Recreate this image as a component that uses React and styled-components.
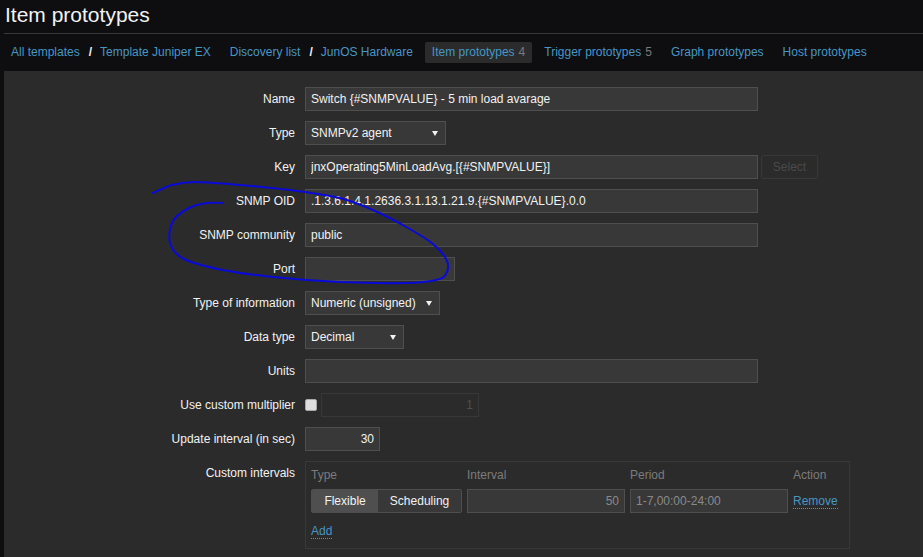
import React from 'react';
import styled, { createGlobalStyle } from 'styled-components';

const GlobalStyle = createGlobalStyle`
  html, body {
    margin: 0;
    background: #0e0e11;
  }
  body {
    font-family: Arial, "Liberation Sans", sans-serif;
    font-size: 12px;
    color: #f2f2f2;
  }
`;

const Page = styled.div`
  position: relative;
  display: flex;
  flex-direction: column;
  min-height: 100vh;
  padding-left: 4px;
  box-sizing: border-box;
  overflow: hidden;
`;

const Header = styled.header`
  height: 33px;
  border-bottom: 1px solid #383838;
`;

const Title = styled.h1`
  margin: 0;
  padding: 3px 0 0 1px;
  font-size: 21px;
  line-height: 24px;
  font-weight: normal;
  color: #f2f2f2;
`;

const Nav = styled.nav`
  display: flex;
  align-items: center;
  gap: 5px;
  padding: 8px 0;
`;

const NavItem = styled.div`
  display: flex;
  align-items: center;
  padding: 0 7px;
  line-height: 21px;
  border-radius: 2px;
  background: ${(p) => (p.$active ? '#2b2b2b' : 'transparent')};
`;

const NavLink = styled.a`
  color: #4796c4;
  text-decoration: none;
`;

const Sep = styled.span`
  margin: 0 8px 0 9px;
  font-weight: bold;
  color: #f2f2f2;
`;

const Count = styled.span`
  margin-left: 4px;
  color: #7a7a7a;
`;

const Panel = styled.main`
  flex: 1;
  background: #2b2b2b;
  padding: 16px 0 20px;
`;

const Form = styled.div`
  display: grid;
  grid-template-columns: 291px 1fr;
  column-gap: 10px;
  row-gap: 10px;
`;

const Label = styled.label`
  text-align: right;
  line-height: 24px;
  white-space: nowrap;
  align-self: start;
`;

const Field = styled.div`
  display: flex;
  align-items: center;
  gap: ${(p) => p.$gap || 0}px;
`;

const Input = styled.input`
  box-sizing: border-box;
  width: ${(p) => p.$w}px;
  height: 24px;
  padding: 0 5px;
  margin: 0;
  background: ${(p) => (p.$disabled ? '#2b2b2b' : '#383838')};
  border: 1px solid ${(p) => (p.$disabled ? '#383838' : '#4f4f4f')};
  color: ${(p) => (p.$disabled ? '#4f4f4f' : p.$muted ? '#8a8a8a' : '#f2f2f2')};
  font-family: Arial, "Liberation Sans", sans-serif;
  font-size: 12px;
  text-align: ${(p) => (p.$right ? 'right' : 'left')};
  outline: none;
`;

const Select = styled.div`
  position: relative;
  box-sizing: border-box;
  width: ${(p) => p.$w}px;
  height: 24px;
  padding: 0 5px;
  line-height: 22px;
  background: #383838;
  border: 1px solid #4f4f4f;
  color: #f2f2f2;
  &::after {
    content: '';
    position: absolute;
    right: 7px;
    top: 9px;
    border-left: 3px solid transparent;
    border-right: 3px solid transparent;
    border-top: 5px solid #f2f2f2;
  }
`;

const GhostButton = styled.button`
  box-sizing: border-box;
  width: 57px;
  height: 24px;
  background: #2b2b2b;
  border: 1px solid #383838;
  border-radius: 2px;
  color: #4a4a4a;
  font-family: Arial, "Liberation Sans", sans-serif;
  font-size: 12px;
  padding: 0;
`;

const Checkbox = styled.span`
  box-sizing: border-box;
  width: 12px;
  height: 12px;
  background: #dedede;
  border: 1px solid #a8a8a8;
  border-radius: 2px;
`;

const IntervalsBox = styled.div`
  box-sizing: border-box;
  width: 545px;
  padding: 5px;
  border: 1px solid #383838;
`;

const IntervalGrid = styled.div`
  display: grid;
  grid-template-columns: 151px 158px 158px auto;
  column-gap: 5px;
  row-gap: 6px;
  align-items: center;
`;

const ColHead = styled.div`
  line-height: 16px;
  color: #7c7c7c;
`;

const RadioGroup = styled.div`
  display: flex;
  box-sizing: border-box;
  height: 24px;
  border: 1px solid #4f4f4f;
  border-radius: 2px;
  overflow: hidden;
`;

const RadioOption = styled.span`
  width: ${(p) => p.$w}px;
  line-height: 22px;
  text-align: center;
  background: ${(p) => (p.$on ? '#4f4f4f' : '#383838')};
  color: #f2f2f2;
`;

const DotLink = styled.a`
  justify-self: start;
  color: #4796c4;
  text-decoration: none;
  line-height: 14px;
  border-bottom: 1px dotted #4796c4;
`;

const AddRow = styled.div`
  grid-column: 1 / -1;
  height: 24px;
  display: flex;
  align-items: center;
`;

const Scribble = styled.svg`
  position: absolute;
  left: 0;
  top: 0;
  pointer-events: none;
`;

// hand-drawn annotation around the SNMP fields
const pts = [
  [153, 193], [172, 185], [195, 182], [240, 185], [290, 190], [340, 198],
  [375, 211], [408, 228], [433, 244], [447, 261], [446, 274], [436, 280],
  [407, 283], [340, 282], [273, 277], [223, 270], [184, 259], [170, 243],
  [173, 221], [189, 208], [207, 203], [223, 203],
];

const smoothPath = (p) => {
  let d = `M${p[0][0]},${p[0][1]}`;
  for (let i = 0; i < p.length - 1; i++) {
    const p0 = p[i - 1] || p[i];
    const p1 = p[i];
    const p2 = p[i + 1];
    const p3 = p[i + 2] || p2;
    const c1 = [p1[0] + (p2[0] - p0[0]) / 6, p1[1] + (p2[1] - p0[1]) / 6];
    const c2 = [p2[0] - (p3[0] - p1[0]) / 6, p2[1] - (p3[1] - p1[1]) / 6];
    d += ` C${c1[0].toFixed(1)},${c1[1].toFixed(1)} ${c2[0].toFixed(1)},${c2[1].toFixed(1)} ${p2[0]},${p2[1]}`;
  }
  return d;
};

const App = () => (
  <Page>
    <GlobalStyle />
    <Header>
      <Title>Item prototypes</Title>
    </Header>
    <Nav>
      <NavItem>
        <NavLink>All templates</NavLink>
        <Sep>/</Sep>
        <NavLink>Template Juniper EX</NavLink>
      </NavItem>
      <NavItem>
        <NavLink>Discovery list</NavLink>
        <Sep>/</Sep>
        <NavLink>JunOS Hardware</NavLink>
      </NavItem>
      <NavItem $active>
        <NavLink>Item prototypes</NavLink>
        <Count>4</Count>
      </NavItem>
      <NavItem>
        <NavLink>Trigger prototypes</NavLink>
        <Count>5</Count>
      </NavItem>
      <NavItem>
        <NavLink>Graph prototypes</NavLink>
      </NavItem>
      <NavItem>
        <NavLink>Host prototypes</NavLink>
      </NavItem>
    </Nav>
    <Panel>
      <Form>
        <Label>Name</Label>
        <Field>
          <Input $w={453} defaultValue="Switch {#SNMPVALUE} - 5 min load avarage" />
        </Field>

        <Label>Type</Label>
        <Field>
          <Select $w={141}>SNMPv2 agent</Select>
        </Field>

        <Label>Key</Label>
        <Field $gap={3}>
          <Input $w={453} defaultValue="jnxOperating5MinLoadAvg.[{#SNMPVALUE}]" />
          <GhostButton>Select</GhostButton>
        </Field>

        <Label>SNMP OID</Label>
        <Field>
          <Input $w={453} defaultValue=".1.3.6.1.4.1.2636.3.1.13.1.21.9.{#SNMPVALUE}.0.0" />
        </Field>

        <Label>SNMP community</Label>
        <Field>
          <Input $w={453} defaultValue="public" />
        </Field>

        <Label>Port</Label>
        <Field>
          <Input $w={150} defaultValue="" />
        </Field>

        <Label>Type of information</Label>
        <Field>
          <Select $w={135}>Numeric (unsigned)</Select>
        </Field>

        <Label>Data type</Label>
        <Field>
          <Select $w={99}>Decimal</Select>
        </Field>

        <Label>Units</Label>
        <Field>
          <Input $w={453} defaultValue="" />
        </Field>

        <Label>Use custom multiplier</Label>
        <Field $gap={4}>
          <Checkbox />
          <Input $w={158} $disabled $right defaultValue="1" />
        </Field>

        <Label>Update interval (in sec)</Label>
        <Field>
          <Input $w={75} $right defaultValue="30" />
        </Field>

        <Label>Custom intervals</Label>
        <Field>
          <IntervalsBox>
            <IntervalGrid>
              <ColHead>Type</ColHead>
              <ColHead>Interval</ColHead>
              <ColHead>Period</ColHead>
              <ColHead>Action</ColHead>

              <RadioGroup>
                <RadioOption $w={67} $on>Flexible</RadioOption>
                <RadioOption $w={84}>Scheduling</RadioOption>
              </RadioGroup>
              <Input $w={158} $muted $right defaultValue="50" />
              <Input $w={158} $muted defaultValue="1-7,00:00-24:00" />
              <DotLink>Remove</DotLink>

              <AddRow>
                <DotLink>Add</DotLink>
              </AddRow>
            </IntervalGrid>
          </IntervalsBox>
        </Field>
      </Form>
    </Panel>
    <Scribble width="923" height="557" viewBox="0 0 923 557">
      <path d={smoothPath(pts)} fill="none" stroke="#0a0ad8" strokeWidth="2" strokeLinecap="round" />
    </Scribble>
  </Page>
);

export default App;
